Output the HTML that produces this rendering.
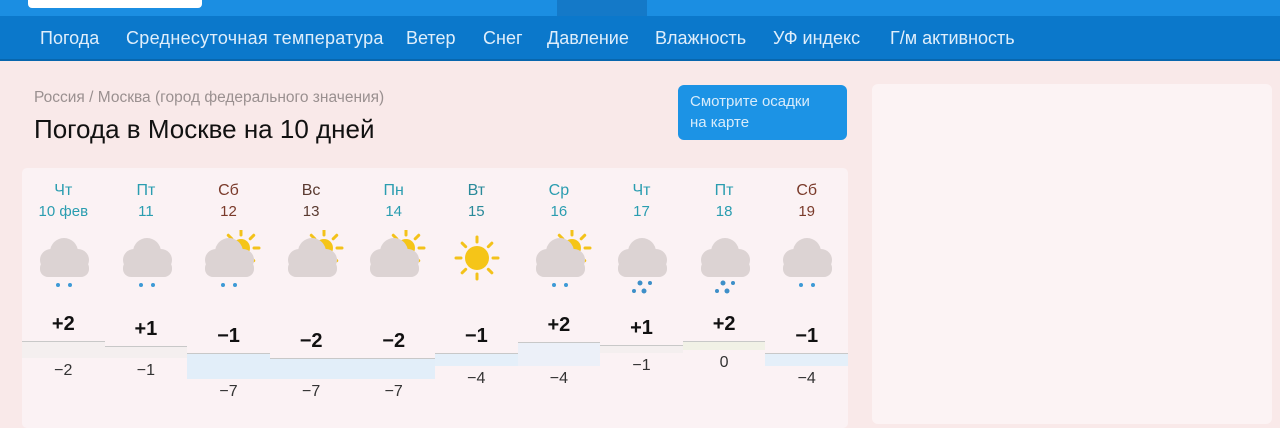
<!DOCTYPE html>
<html><head><meta charset="utf-8"><style>
*{margin:0;padding:0;box-sizing:border-box}
body{width:1280px;height:416px;overflow:hidden;background:#f9e9e9;font-family:"Liberation Sans","Noto Sans CJK SC",sans-serif;position:relative}
.top{position:absolute;left:0;top:0;width:1280px;height:16px;background:#1b8ee2}
.search{position:absolute;left:28px;top:-4px;width:174px;height:12px;background:#fff;border-radius:4px}
.tab{position:absolute;left:557px;top:0;width:90px;height:16px;background:#1479c8}
.nav{position:absolute;left:0;top:16px;width:1280px;height:45px;background:#0b78cb;border-bottom:2px solid #0866ad}
.nav span{position:absolute;top:12px;color:#dfeefb;font-size:18px}
.crumb{position:absolute;left:34px;top:89px;color:#9a9090;font-size:15.5px}
h1{position:absolute;left:34px;top:114px;font-weight:normal;font-size:26px;color:#111}
.btn{position:absolute;left:678px;top:85px;width:169px;height:55px;background:#1c93e5;border-radius:6px;color:#d8ecfb;font-size:15px;padding:6px 12px;line-height:21px}
.right{position:absolute;left:872px;top:84px;width:400px;height:340px;background:#fcf3f4;border-radius:6px}
.card{position:absolute;left:22px;top:168px;width:826px;height:260px;background:#fbf2f4;border-radius:5px}
.col{position:absolute;top:0;width:82.6px;height:260px;text-align:center}
.d{position:absolute;left:0;right:0;top:14px;font-size:16px}
.dt{position:absolute;left:0;right:0;top:35px;font-size:15px}
.band{position:absolute;left:0;right:0;border-top:1px solid #c8c8c8}
.mx{position:absolute;left:0;right:0;font-size:20px;font-weight:bold;color:#111}
.mn{position:absolute;left:0;right:0;font-size:16px;color:#333}
svg{position:absolute;left:10px;top:62px}
</style></head><body>
<div class="top"><div class="search"></div><div class="tab"></div></div>
<div class="nav">
<span style="left:40px">Погода</span><span style="left:126px;letter-spacing:0.3px">Среднесуточная температура</span><span style="left:406px">Ветер</span><span style="left:483px">Снег</span><span style="left:547px">Давление</span><span style="left:655px">Влажность</span><span style="left:773px">УФ индекс</span><span style="left:890px">Г/м активность</span>
</div>
<div class="crumb">Россия / Москва (город федерального значения)</div>
<h1>Погода в Москве на 10 дней</h1>
<div class="btn">Смотрите осадки<br>на карте</div>
<div class="right"></div>
<div class="card" id="c"></div>
<script>
var cols=[
["Чт","10 фев","#2a9db0","c",2,-2,173,190,"#f4efef"],
["Пт","11","#2a9db0","c",1,-1,178,190,"#f4efef"],
["Сб","12","#7a3a2a","ps",-1,-7,185,211,"#e2eef9"],
["Вс","13","#5a3a30","p",-2,-7,190,211,"#e2eef9"],
["Пн","14","#2a9db0","p",-2,-7,190,211,"#e2eef9"],
["Вт","15","#2a8a9a","s",-1,-4,185,198,"#e4eff9"],
["Ср","16","#2a9db0","ps",2,-4,174,198,"#ecf0f8"],
["Чт","17","#2a9db0","r",1,-1,177,185,"#f4efef"],
["Пт","18","#2a9db0","r",2,0,173,182,"#f1f1e6"],
["Сб","19","#7a3a2a","c",-1,-4,185,198,"#e4eff9"]];
var h="";
function cloud(){return '<g fill="#dcd3d3"><circle cx="19" cy="30" r="11"/><circle cx="32" cy="22" r="14"/><circle cx="46" cy="30" r="11"/><rect x="8" y="30" width="49" height="17" rx="8"/></g>';}
function sun(x,y,r){var s='<g stroke="#f3c21a" stroke-width="3" stroke-linecap="round">';for(var i=0;i<8;i++){var a=i*Math.PI/4;s+='<line x1="'+(x+Math.cos(a)*(r+4))+'" y1="'+(y+Math.sin(a)*(r+4))+'" x2="'+(x+Math.cos(a)*(r+9))+'" y2="'+(y+Math.sin(a)*(r+9))+'"/>';}return s+'</g><circle cx="'+x+'" cy="'+y+'" r="'+r+'" fill="#f5c518"/>';}
cols.forEach(function(c,i){
var ic='<svg width="66" height="70" viewBox="0 0 66 70">';
if(c[3]=="s")ic+=sun(32,28,12);
else{if(c[3]=="p"||c[3]=="ps")ic+=sun(44,18,9);ic+=cloud();}
if(c[3]=="c"||c[3]=="ps")ic+='<g fill="#3d9ad6"><circle cx="26" cy="55" r="2"/><circle cx="38" cy="55" r="2"/></g>';
if(c[3]=="r")ic+='<g fill="#3d8fc8"><circle cx="30" cy="53" r="2.5"/><circle cx="40" cy="53" r="2"/><circle cx="24" cy="61" r="2"/><circle cx="34" cy="61" r="2.5"/></g>';
ic+='</svg>';
var L=i*82.6;
h+='<div class="col" style="left:'+L+'px"><div class="d" style="color:'+c[2]+'">'+c[0]+'</div><div class="dt" style="color:'+c[2]+'">'+c[1]+'</div>'+ic+
'<div class="band" style="top:'+c[6]+'px;height:'+(c[7]-c[6])+'px;background:'+c[8]+'"></div>'+
'<div class="mx" style="top:'+(c[6]-28)+'px">'+(c[4]>0?'+'+c[4]:(c[4]<0?'−'+(-c[4]):'0'))+'</div>'+
'<div class="mn" style="top:'+(c[7]+4)+'px">'+(c[5]<0?'−'+(-c[5]):c[5])+'</div></div>';
});
document.getElementById('c').innerHTML=h;
</script>
</body></html>
